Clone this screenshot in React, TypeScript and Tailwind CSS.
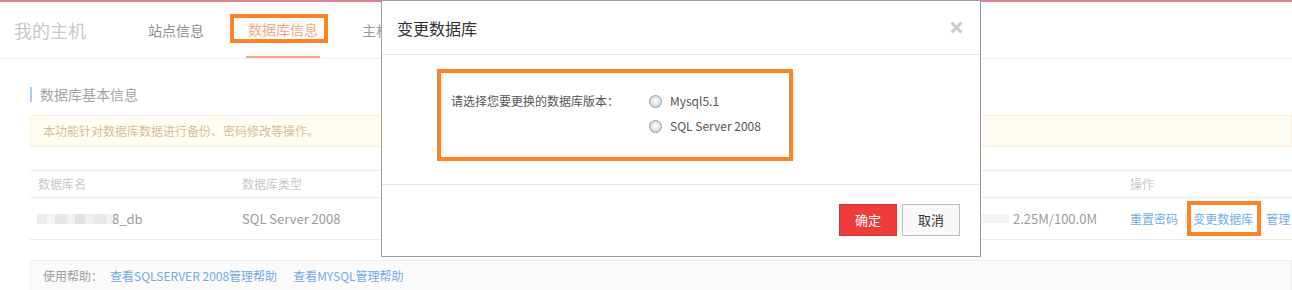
import type { ReactNode } from "react"

const font = { fontFamily: '"Noto Sans CJK SC", "Noto Sans", sans-serif' }

function Radio() {
  return (
    <span className="inline-block w-[13px] h-[13px] rounded-full border border-[#9c9c9c] bg-[radial-gradient(circle_at_50%_45%,#ffffff_0%,#e6e6e6_45%,#c4c4c4_100%)] shrink-0" />
  )
}

function Link({ children }: { children: ReactNode }) {
  return <span className="text-[#72abe2]">{children}</span>
}

function Modal() {
  return (
    <div className="absolute left-[381px] top-0 w-[600px] h-[257px] bg-white border border-[#9d9d9d] flex flex-col">
      {/* 标题 */}
      <div className="h-[54px] shrink-0 flex items-center justify-between pl-[15px] pr-[17px] border-b border-[#e5e5e5]">
        <h2 className="text-[16px] text-[#333]">变更数据库</h2>
        <svg width="13" height="13" viewBox="0 0 13 13" className="text-[#cbcbcb]">
          <path d="M1.5 1.5 L11.5 11.5 M11.5 1.5 L1.5 11.5" stroke="currentColor" strokeWidth="3" />
        </svg>
      </div>

      {/* 内容 */}
      <div className="h-[129px] shrink-0 pt-[14px] pl-[55px]">
        <div className="w-[356px] h-[92px] border-4 border-[#ff8326] pl-[10px] pt-[20px] flex text-[12px]">
          <div className="w-[198px] text-[#555] leading-[16px]">请选择您要更换的数据库版本：</div>
          <div className="flex flex-col gap-[9px] text-[#555]">
            <label className="flex items-center gap-[8px] h-[16px]">
              <Radio />
              <span>Mysql5.1</span>
            </label>
            <label className="flex items-center gap-[8px] h-[16px]">
              <Radio />
              <span>SQL Server 2008</span>
            </label>
          </div>
        </div>
      </div>

      {/* 按钮 */}
      <div className="flex-1 border-t border-[#e5e5e5] flex items-center justify-end gap-[5px] pr-[20px] pb-[2px]">
        <button className="w-[58px] h-[32px] bg-[#f03b3b] border border-[#d93333] text-white text-[13px]">确定</button>
        <button className="w-[58px] h-[32px] bg-[#f8f8f8] border border-[#bbb] text-[#333] text-[13px]">取消</button>
      </div>
    </div>
  )
}

export default function App() {
  return (
    <div className="relative w-full h-[290px] overflow-hidden bg-white" style={font}>
      <div className="h-[2px] bg-[#e27f8d]" />

      {/* 顶部导航 */}
      <div className="h-[57px] flex items-stretch border-b border-[#eee]">
        <div className="ml-[14px] flex items-center text-[18px] text-[#c9c9c9]">我的主机</div>
        <div className="ml-[62px] flex items-center text-[14px] text-[#8c8c8c]">站点信息</div>
        <div className="relative ml-[42px] w-[74px] flex items-center justify-center text-[14px] text-[#fca585] border-b-2 border-[#ffa583]">
          数据库信息
          <span className="absolute left-[-16px] right-[-8px] top-[12px] h-[29px] border-4 border-[#ff8326]" />
        </div>
        <div className="ml-[42px] flex items-center text-[14px] text-[#999]">主机信息</div>
      </div>

      <div className="pl-[30px]">
        {/* 小标题 */}
        <div className="mt-[28px] h-[15px] flex items-center border-l-2 border-[#a9cce9] pl-[8px] text-[14px] text-[#a3a3a3]">
          数据库基本信息
        </div>

        {/* 提示 */}
        <div className="mt-[13px] h-[32px] flex items-center pl-[12px] bg-[#fffcf3] border border-[#fcefd3] text-[12px] text-[#d9bd97]">
          本功能针对数据库数据进行备份、密码修改等操作。
        </div>

        {/* 表格 */}
        <div className="mt-[23px] border-t border-[#ececec]">
          <div className="h-[27px] flex items-center text-[12px] text-[#c8c8c8] border-b border-[#ececec]">
            <div className="w-[212px] pl-[8px]">数据库名</div>
            <div className="w-[738px]">数据库类型</div>
            <div className="w-[150px]" />
            <div>操作</div>
          </div>
          <div className="h-[42px] flex items-center text-[13px] text-[#9a9a9a] border-b border-[#ececec]">
            <div className="w-[212px] pl-[7px] flex items-center">
              <span className="flex h-[10px]">
                <span className="w-[10px] bg-[#ececec]" />
                <span className="w-[8px] bg-[#f4f4f4]" />
                <span className="w-[12px] bg-[#e6e6e6]" />
                <span className="w-[8px] bg-[#f2f2f2]" />
                <span className="w-[10px] bg-[#e2e2e2]" />
                <span className="w-[9px] bg-[#efefef]" />
                <span className="w-[12px] bg-[#e8e8e8]" />
                <span className="w-[6px] bg-[#f1f1f1]" />
              </span>
              <span>8_db</span>
            </div>
            <div className="w-[738px]">SQL Server 2008</div>
            <div className="w-[150px] flex items-center">
              <span className="w-[29px] h-[9px] bg-[#f4f4f4]" />
              <span className="ml-[4px]">2.25M/100.0M</span>
            </div>
            <div className="flex items-center text-[12px] text-[#74ace3]">
              <span>重置密码</span>
              <span className="mx-[6px] text-[#ddd]">|</span>
              <span className="relative">
                变更数据库
                <span className="absolute left-[-6px] right-[-8px] top-[-9px] bottom-[-8px] border-4 border-[#ff8326]" />
              </span>
              <span className="ml-[13px]">管理</span>
            </div>
          </div>
        </div>

        {/* 帮助 */}
        <div className="mt-[20px] h-[40px] bg-[#fafafa] border border-[#eee] pl-[12px] pt-[6px] text-[12px] flex">
          <span className="text-[#9d9d9d]">使用帮助：</span>
          <span className="ml-[7px]"><Link>查看SQLSERVER 2008管理帮助</Link></span>
          <span className="ml-[16px]"><Link>查看MYSQL管理帮助</Link></span>
        </div>
      </div>

      <Modal />
    </div>
  )
}
